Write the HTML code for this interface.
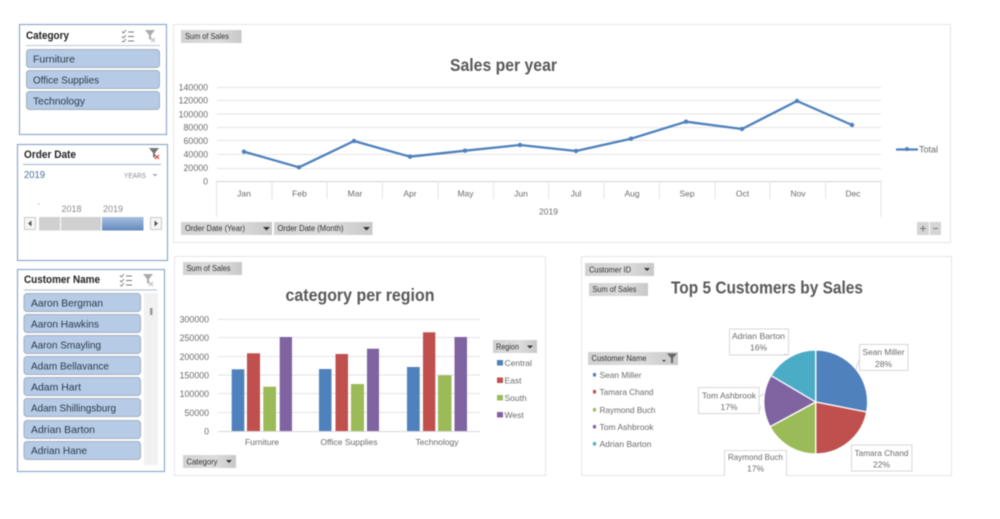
<!DOCTYPE html>
<html><head><meta charset="utf-8"><style>
html,body{margin:0;padding:0;background:#fff;width:1000px;height:519px;overflow:hidden}
svg{display:block;filter:blur(0.5px)}
text{font-family:"Liberation Sans",sans-serif}
.ax{font-size:8.8px;fill:#6a6a6a}
.b{font-size:10.5px;fill:#2b3a4a}
.h{font-size:10.8px;font-weight:bold;fill:#222}
.f{font-size:8px;fill:#333}
.t{font-weight:bold;fill:#595959;font-size:17.5px}
.g{stroke:#e3e3e3;stroke-width:1;fill:none}
.p{fill:#fff;stroke:#e6e6ea;stroke-width:1}
.s{fill:#fff;stroke:#86a3cc;stroke-width:1.100}
.i{fill:#b5cbe6;stroke:#a3afbe;stroke-width:1}
.l{fill:#fff;stroke:#cfcfcf;stroke-width:.8}
</style></head><body>
<svg xmlns="http://www.w3.org/2000/svg" width="1000" height="519" viewBox="0 0 1000 519">
<defs><linearGradient id="bt" x1="0" y1="0" x2="1" y2="0"><stop offset="0" stop-color="#d2d2d2"/><stop offset=".6" stop-color="#dcdcdc"/><stop offset="1" stop-color="#c8c8c8"/></linearGradient>
<linearGradient id="bl" x1="0" y1="0" x2="0" y2="1"><stop offset="0" stop-color="#a8c0e0"/><stop offset="1" stop-color="#6488bc"/></linearGradient></defs>

<!-- Category slicer -->
<rect class="s" x="19.500" y="24.500" width="147" height="110"/>
<text class="h" x="26" y="39" textLength="43" lengthAdjust="spacingAndGlyphs">Category</text>
<path d="M26 45.500H160" stroke="#b9c6d8" fill="none"/>
<path d="M122 31.500l1.500 1.500 2.500-3M122 36.500l1.500 1.500 2.500-3M122 41l1.500 1 2.500-3M128 32h6M128 36.500h6M128 41h6" stroke="#777" stroke-width=".9" fill="none"/>
<path d="M145 30h10l-4 5v5l-2-1v-4z" fill="#aaa"/><path d="M151 38l4 4M155 38l-4 4" stroke="#bbb" fill="none"/>
<rect class="i" x="26.500" y="49.500" width="133" height="18" rx="3"/>
<rect class="i" x="26.500" y="70.500" width="133" height="18" rx="3"/>
<rect class="i" x="26.500" y="91.500" width="133" height="18" rx="3"/>
<text class="b" x="33" y="62.500" textLength="42" lengthAdjust="spacingAndGlyphs">Furniture</text>
<text class="b" x="33" y="83.500" textLength="66" lengthAdjust="spacingAndGlyphs">Office Supplies</text>
<text class="b" x="33" y="104.500" textLength="52" lengthAdjust="spacingAndGlyphs">Technology</text>

<!-- Order Date slicer -->
<rect class="s" x="17.500" y="144.500" width="150" height="116"/>
<text class="h" x="24" y="158" textLength="52" lengthAdjust="spacingAndGlyphs">Order Date</text>
<path d="M23 164.500H161" stroke="#9fb6d4" fill="none"/>
<path d="M149 148h10l-4 5v5l-2-1v-4z" fill="#777"/><path d="M155 155l4 4M159 155l-4 4" stroke="#d33" fill="none"/>
<text x="24" y="178" font-size="10.500" fill="#4a6f9c" textLength="21" lengthAdjust="spacingAndGlyphs">2019</text>
<text x="124" y="178" font-size="7.500" fill="#8a8a8a" textLength="22" lengthAdjust="spacingAndGlyphs">YEARS</text>
<path d="M152.500 174h5l-2.500 2.500z" fill="#aaa"/>
<text x="38" y="209" font-size="8" fill="#999">'</text>
<text x="61.500" y="212" font-size="9" fill="#8a8a8a" textLength="20" lengthAdjust="spacingAndGlyphs">2018</text>
<text x="103" y="212" font-size="9" fill="#8a8a8a" textLength="20" lengthAdjust="spacingAndGlyphs">2019</text>
<rect x="24.500" y="217.500" width="11" height="12" fill="#f6f6f6" stroke="#ccc"/>
<path d="M31.500 220.500v6l-3.500-3z" fill="#555"/>
<rect x="39" y="217" width="21" height="13.500" fill="#d0d0d0"/>
<rect x="61" y="217" width="40" height="13.500" fill="#d0d0d0"/>
<rect x="102" y="217" width="41.500" height="13.500" fill="url(#bl)"/>
<rect x="150.500" y="217.500" width="11" height="12" fill="#f6f6f6" stroke="#ccc"/>
<path d="M154.500 220.500v6l3.500-3z" fill="#555"/>

<!-- Customer slicer -->
<rect class="s" x="17.500" y="269.500" width="147" height="202"/>
<text class="h" x="24" y="283" textLength="76" lengthAdjust="spacingAndGlyphs">Customer Name</text>
<path d="M24 290H157" stroke="#b9c6d8" stroke-width="1.200" fill="none"/>
<path d="M120 275.500l1.500 1.500 2.500-3M120 280.500l1.500 1.500 2.500-3M120 285l1.500 1 2.500-3M126 276h6M126 280.500h6M126 285h6" stroke="#777" stroke-width=".9" fill="none"/>
<path d="M143 274h10l-4 5v5l-2-1v-4z" fill="#aaa"/><path d="M149 282l4 4M153 282l-4 4" stroke="#bbb" fill="none"/>
<rect x="144" y="293" width="14" height="172" fill="#f1f1f1"/>
<rect x="150" y="308" width="2.500" height="7" fill="#999"/>
<rect class="i" x="24" y="293.500" width="116.500" height="18" rx="3"/>
<rect class="i" x="24" y="314.500" width="116.500" height="18" rx="3"/>
<rect class="i" x="24" y="335.500" width="116.500" height="18" rx="3"/>
<rect class="i" x="24" y="356.500" width="116.500" height="18" rx="3"/>
<rect class="i" x="24" y="377.500" width="116.500" height="18" rx="3"/>
<rect class="i" x="24" y="398.500" width="116.500" height="18" rx="3"/>
<rect class="i" x="24" y="420.500" width="116.500" height="18" rx="3"/>
<rect class="i" x="24" y="441.500" width="116.500" height="18" rx="3"/>
<text class="b" x="31" y="306.500" textLength="72" lengthAdjust="spacingAndGlyphs">Aaron Bergman</text>
<text class="b" x="31" y="327.500" textLength="68" lengthAdjust="spacingAndGlyphs">Aaron Hawkins</text>
<text class="b" x="31" y="348.500" textLength="70" lengthAdjust="spacingAndGlyphs">Aaron Smayling</text>
<text class="b" x="31" y="369.500" textLength="78" lengthAdjust="spacingAndGlyphs">Adam Bellavance</text>
<text class="b" x="31" y="390.500" textLength="50" lengthAdjust="spacingAndGlyphs">Adam Hart</text>
<text class="b" x="31" y="411.500" textLength="85" lengthAdjust="spacingAndGlyphs">Adam Shillingsburg</text>
<text class="b" x="31" y="433" textLength="64" lengthAdjust="spacingAndGlyphs">Adrian Barton</text>
<text class="b" x="31" y="454" textLength="56" lengthAdjust="spacingAndGlyphs">Adrian Hane</text>

<!-- Line chart -->
<rect class="p" x="173.500" y="24.500" width="777" height="218"/>
<rect x="181" y="30" width="60.500" height="13" fill="url(#bt)"/>
<text class="f" x="185" y="39" textLength="44" lengthAdjust="spacingAndGlyphs">Sum of Sales</text>
<text class="t" x="450" y="71" textLength="107" lengthAdjust="spacingAndGlyphs">Sales per year</text>
<path class="g" d="M217 87.500H881M217 100.500H881M217 114H881M217 127.500H881M217 140.500H881M217 154.500H881M217 168.500H881"/>
<path d="M217 181.500H881" stroke="#d5d5d5" fill="none"/>
<path class="g" d="M216.500 181V217M272 181V199M327 181V199M382.500 181V199M438 181V199M493.500 181V199M548.500 181V199M604 181V199M659.500 181V199M715 181V199M770 181V199M825.500 181V199M881 181V217"/>
<g class="ax" text-anchor="end">
<text x="208" y="90.500">140000</text><text x="208" y="103.700">120000</text><text x="208" y="117.500">100000</text><text x="208" y="130.700">80000</text><text x="208" y="144">60000</text><text x="208" y="157.700">40000</text><text x="208" y="171">20000</text><text x="208" y="184.500">0</text>
</g>
<g class="ax" text-anchor="middle" style="font-size:8.500px">
<text x="244" y="196.500">Jan</text><text x="299.500" y="196.500">Feb</text><text x="355" y="196.500">Mar</text><text x="410" y="196.500">Apr</text><text x="465.500" y="196.500">May</text><text x="521" y="196.500">Jun</text><text x="576" y="196.500">Jul</text><text x="632" y="196.500">Aug</text><text x="687" y="196.500">Sep</text><text x="742.500" y="196.500">Oct</text><text x="798" y="196.500">Nov</text><text x="853" y="196.500">Dec</text>
<text x="548.500" y="214.500">2019</text>
</g>
<polyline points="244,151.700 299,167.300 354,141 410,156.700 465,150.700 520,145 576,151 631,138.700 686,121.700 742,129 797,101 852,125" fill="none" stroke="#4f81bd" stroke-width="2.300" stroke-linejoin="round"/>
<g fill="#4f81bd"><circle cx="244" cy="151.700" r="2.200"/><circle cx="299" cy="167.300" r="2.200"/><circle cx="354" cy="141" r="2.200"/><circle cx="410" cy="156.700" r="2.200"/><circle cx="465" cy="150.700" r="2.200"/><circle cx="520" cy="145" r="2.200"/><circle cx="576" cy="151" r="2.200"/><circle cx="631" cy="138.700" r="2.200"/><circle cx="686" cy="121.700" r="2.200"/><circle cx="742" cy="129" r="2.200"/><circle cx="797" cy="101" r="2.200"/><circle cx="852" cy="125" r="2.200"/><circle cx="907" cy="149" r="2"/></g>
<path d="M896 149.500H918" stroke="#4f81bd" stroke-width="2.200" fill="none"/>
<text class="ax" x="919" y="152.500" textLength="19" lengthAdjust="spacingAndGlyphs">Total</text>
<rect x="181" y="222" width="91" height="13" fill="url(#bt)"/>
<text class="f" x="185" y="231" textLength="60" lengthAdjust="spacingAndGlyphs">Order Date (Year)</text>
<path d="M263 227h7l-3.500 3.500z" fill="#333"/>
<rect x="274" y="222" width="98.500" height="13" fill="url(#bt)"/>
<text class="f" x="277.500" y="231" textLength="66" lengthAdjust="spacingAndGlyphs">Order Date (Month)</text>
<path d="M363 227h7l-3.500 3.500z" fill="#333"/>
<rect x="917" y="222" width="12" height="13" fill="#d5d5d5"/><rect x="930" y="222" width="11" height="13" fill="#d5d5d5"/>
<path d="M920 228.500h6M923 225.500v6M933 228.500h5" stroke="#777" fill="none"/>

<!-- Bar chart -->
<rect class="p" x="174.500" y="256.500" width="371" height="219"/>
<rect x="183" y="262" width="59" height="13" fill="url(#bt)"/>
<text class="f" x="186.500" y="271" textLength="44" lengthAdjust="spacingAndGlyphs">Sum of Sales</text>
<text class="t" x="285.500" y="301" textLength="149" lengthAdjust="spacingAndGlyphs">category per region</text>
<path class="g" d="M218 319.500H480M218 337.500H480M218 356.500H480M218 375H480M218 393.500H480M218 412.500H480"/>
<path d="M218 431.500H480" stroke="#d9d9d9" fill="none"/>
<g class="ax" text-anchor="end">
<text x="209" y="322.500">300000</text><text x="209" y="341">250000</text><text x="209" y="359.800">200000</text><text x="209" y="378.500">150000</text><text x="209" y="397">100000</text><text x="209" y="415.800">50000</text><text x="209" y="434.500">0</text>
</g>
<g fill="#4f81bd"><rect x="231.700" y="369.300" width="12.600" height="61.700"/><rect x="319" y="369" width="12.500" height="62"/><rect x="407" y="367" width="12.700" height="64"/></g>
<g fill="#c0504d"><rect x="247" y="353.300" width="13" height="77.700"/><rect x="335.500" y="354" width="12.500" height="77"/><rect x="423" y="332.300" width="12.300" height="98.700"/></g>
<g fill="#9bbb59"><rect x="263.300" y="386.700" width="12.700" height="44.300"/><rect x="351" y="384" width="13" height="47"/><rect x="438" y="375.300" width="13.500" height="55.700"/></g>
<g fill="#8064a2"><rect x="279.700" y="337" width="12.300" height="94"/><rect x="367" y="348.700" width="12" height="82.300"/><rect x="454.500" y="337" width="12.500" height="94"/></g>
<g class="ax" text-anchor="middle" style="font-size:8.500px">
<text x="262" y="445">Furniture</text><text x="349" y="445">Office Supplies</text><text x="437" y="445">Technology</text>
</g>
<rect x="493" y="340" width="44" height="13" fill="url(#bt)"/>
<text class="f" x="496" y="349.500" textLength="23" lengthAdjust="spacingAndGlyphs">Region</text>
<path d="M527 345.500h6l-3 3z" fill="#333"/>
<rect x="497" y="360" width="6" height="5.500" fill="#4f81bd"/><rect x="497" y="377.500" width="6" height="5.500" fill="#c0504d"/><rect x="497" y="395" width="6" height="5.500" fill="#9bbb59"/><rect x="497" y="412" width="6" height="5.500" fill="#8064a2"/>
<g class="ax" style="font-size:8.500px"><text x="504.500" y="366">Central</text><text x="504.500" y="383.500">East</text><text x="504.500" y="401">South</text><text x="504.500" y="418">West</text></g>
<rect x="183" y="455" width="53" height="13" fill="url(#bt)"/>
<text class="f" x="186.500" y="464.500" textLength="31" lengthAdjust="spacingAndGlyphs">Category</text>
<path d="M226 460h6l-3 3z" fill="#333"/>

<!-- Pie chart -->
<rect class="p" x="581.500" y="256.500" width="370" height="219"/>
<rect x="585" y="263" width="69" height="13" fill="url(#bt)"/>
<text class="f" x="589" y="272.500" textLength="42" lengthAdjust="spacingAndGlyphs">Customer ID</text>
<path d="M644 268h6l-3 3z" fill="#333"/>
<rect x="589" y="283" width="59" height="13" fill="url(#bt)"/>
<text class="f" x="592.500" y="292" textLength="44" lengthAdjust="spacingAndGlyphs">Sum of Sales</text>
<text class="t" x="671" y="293.500" textLength="192" lengthAdjust="spacingAndGlyphs">Top 5 Customers by Sales</text>
<rect x="588" y="352" width="90" height="13" fill="url(#bt)"/>
<text class="f" x="591.500" y="361" textLength="55" lengthAdjust="spacingAndGlyphs">Customer Name</text>
<path d="M662 360h4l-2 2z" fill="#444"/><path d="M667 353.500h10l-4 4.500v5h-2v-5z" fill="#666"/>
<rect x="593" y="373" width="3" height="3.500" fill="#4f81bd"/><rect x="593" y="390" width="3" height="3.500" fill="#c0504d"/><rect x="593" y="408" width="3" height="3.500" fill="#9bbb59"/><rect x="593" y="425" width="3" height="3.500" fill="#8064a2"/><rect x="593" y="442" width="3" height="3.500" fill="#4bacc6"/>
<g class="ax" style="font-size:8.500px"><text x="599.500" y="378" textLength="42" lengthAdjust="spacingAndGlyphs">Sean Miller</text><text x="599.500" y="395" textLength="54" lengthAdjust="spacingAndGlyphs">Tamara Chand</text><text x="599.500" y="413" textLength="56" lengthAdjust="spacingAndGlyphs">Raymond Buch</text><text x="599.500" y="430" textLength="54" lengthAdjust="spacingAndGlyphs">Tom Ashbrook</text><text x="599.500" y="447" textLength="52" lengthAdjust="spacingAndGlyphs">Adrian Barton</text></g>
<g stroke="#fff" stroke-width="1.300">
<path d="M815.700 402V350A52 52 0 0 1 866.700 412Z" fill="#4f81bd"/>
<path d="M815.700 402L866.700 412A52 52 0 0 1 815.700 454Z" fill="#c0504d"/>
<path d="M815.700 402V454A52 52 0 0 1 770 426.700Z" fill="#9bbb59"/>
<path d="M815.700 402L770 426.700A52 52 0 0 1 771 375.500Z" fill="#8064a2"/>
<path d="M815.700 402L771 375.500A52 52 0 0 1 815.700 350Z" fill="#4bacc6"/>
</g>
<rect class="l" x="729.500" y="329" width="59" height="26"/>
<path d="M788 355l-4-1M859 360l-3 9M759 397l5 -3 M759 411l2 -5" stroke="#ccc" fill="none" stroke-width=".8"/>
<rect class="l" x="859.500" y="344.500" width="48.500" height="26"/>
<rect class="l" x="698.500" y="387.500" width="60.500" height="26"/>
<path class="l" d="M724.500 476V450.500H786.500V476" fill="none"/>
<rect class="l" x="851.500" y="445" width="60.500" height="26"/>
<g class="ax" text-anchor="middle" style="font-size:8.500px">
<text x="758.500" y="339" textLength="53" lengthAdjust="spacingAndGlyphs">Adrian Barton</text><text x="758.500" y="350.500">16%</text>
<text x="883.500" y="355" textLength="42" lengthAdjust="spacingAndGlyphs">Sean Miller</text><text x="883.500" y="367">28%</text>
<text x="729" y="398.500" textLength="54" lengthAdjust="spacingAndGlyphs">Tom Ashbrook</text><text x="729" y="410">17%</text>
<text x="755.500" y="460" textLength="55" lengthAdjust="spacingAndGlyphs">Raymond Buch</text><text x="755.500" y="471.500">17%</text>
<text x="881.500" y="456" textLength="54" lengthAdjust="spacingAndGlyphs">Tamara Chand</text><text x="881.500" y="467.500">22%</text>
</g>
</svg>
</body></html>
